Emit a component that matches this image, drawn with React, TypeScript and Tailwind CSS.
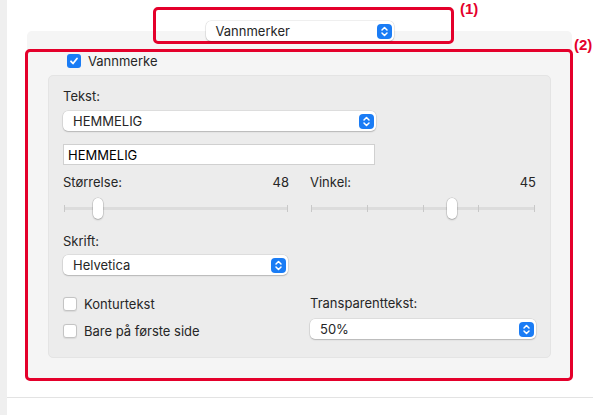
import React from "react";

const Stepper = () => (
    <span className="flex h-[15px] w-[15px] items-center justify-center rounded-[4px] bg-[#1a7cf5]">
        <svg width="9" height="11" viewBox="0 0 9 11" fill="none" stroke="white" strokeWidth={1.5} strokeLinecap="round" strokeLinejoin="round">
            <path d="M2 4l2.5-2.5L7 4" />
            <path d="M2 7l2.5 2.5L7 7" />
        </svg>
    </span>
);

const Popup = ({ label, className = "" }: { label: string; className?: string }) => (
    <div className={`flex h-[20px] items-center justify-between rounded-[5px] bg-white pl-[10px] pr-[2px] shadow-[0_0_0_0.5px_rgba(0,0,0,0.12),0_1px_1.5px_rgba(0,0,0,0.18)] ${className}`}>
        <span className="text-[13px] text-[#262626]">{label}</span>
        <Stepper />
    </div>
);

const Checkbox = ({ checked = false }: { checked?: boolean }) =>
    checked ? (
        <span className="flex h-[14px] w-[14px] items-center justify-center rounded-[3px] bg-[#1a7cf5]">
            <svg width="10" height="10" viewBox="0 0 10 10" fill="none" stroke="white" strokeWidth={1.8} strokeLinecap="round" strokeLinejoin="round">
                <path d="M2 5.3l2 2.2L8 2.5" />
            </svg>
        </span>
    ) : (
        <span className="h-[14px] w-[14px] rounded-[3px] border border-[#c4c4c4] bg-white shadow-[0_0.5px_1px_rgba(0,0,0,0.08)]" />
    );

const Slider = ({ ticks, thumb }: { ticks: number; thumb: number }) => (
    <div className="relative mx-[1px] h-[22px]">
        <div className="absolute left-0 right-0 top-[9px] h-[3px] rounded-full bg-[#dcdcdc]" />
        <div className="absolute left-0 right-0 top-[7px] flex justify-between">
            {Array.from({ length: ticks }).map((_, i) => (
                <span key={i} className="h-[7px] w-px bg-[#c8c8c8]" />
            ))}
        </div>
        <div
            className="absolute top-0 h-[21px] w-[10px] rounded-full bg-white shadow-[0_0_0_0.5px_rgba(0,0,0,0.18),0_1px_2px_rgba(0,0,0,0.2)]"
            style={{ left: thumb }}
        />
    </div>
);

export default function App() {
    return (
        <div className="relative flex h-[415px] w-[593px] overflow-hidden bg-white font-['Inter','Liberation_Sans',sans-serif] text-[13px] leading-[16px] text-[#262626]">
            <div className="w-[7px] shrink-0 bg-[#efefef]" />

            <div className="flex flex-1 flex-col">
                <div className="flex flex-col pl-[20px] pr-[21px] pt-[21px]">
                    <div className="relative z-10 flex justify-center">
                        <Popup label="Vannmerker" className="w-[188px] pl-[9px]" />
                    </div>

                    <div className="-mt-[10px] h-[347px] rounded-t-[5px] bg-[#f5f5f5] px-[21px] pt-[22px]">
                        <label className="ml-[19px] flex h-[16px] items-center gap-[7px]">
                            <Checkbox checked />
                            <span>Vannmerke</span>
                        </label>

                        <div className="mt-[6px] h-[283px] rounded-[5px] border border-[#e4e4e4] bg-[#ececec] px-[14px] pt-[12px]">
                            <div>Tekst:</div>
                            <Popup label="HEMMELIG" className="mt-[7px] w-[313px]" />
                            <div className="mt-[13px] flex h-[21px] w-[312px] items-center border border-[#d0d0d0] bg-white px-[4px] text-black">
                                HEMMELIG
                            </div>

                            <div className="mt-[9px] grid grid-cols-2 gap-x-[21px]">
                                <div>
                                    <div className="flex justify-between">
                                        <span>Størrelse:</span>
                                        <span>48</span>
                                    </div>
                                    <div className="mt-[8px]">
                                        <Slider ticks={2} thumb={29} />
                                    </div>
                                </div>
                                <div>
                                    <div className="flex justify-between">
                                        <span>Vinkel:</span>
                                        <span>45</span>
                                    </div>
                                    <div className="mt-[8px]">
                                        <Slider ticks={5} thumb={136} />
                                    </div>
                                </div>
                            </div>

                            <div className="mt-[13px]">Skrift:</div>
                            <Popup label="Helvetica" className="mt-[6px] w-[225px]" />

                            <div className="mt-[20px] grid grid-cols-2 gap-x-[21px]">
                                <div className="flex flex-col gap-[11px] pt-[1px]">
                                    <label className="flex h-[16px] items-center gap-[7px]">
                                        <Checkbox />
                                        <span>Konturtekst</span>
                                    </label>
                                    <label className="flex h-[16px] items-center gap-[7px]">
                                        <Checkbox />
                                        <span>Bare på første side</span>
                                    </label>
                                </div>
                                <div>
                                    <div>Transparenttekst:</div>
                                    <Popup label="50%" className="mt-[8px] w-[226px]" />
                                </div>
                            </div>
                        </div>
                    </div>
                </div>

                <div className="mt-[19px] border-t border-[#e3e3e3]" />
            </div>

            {/* annotations */}
            <div className="pointer-events-none absolute left-[153px] top-[7px] h-[37px] w-[301px] rounded-[5px] border-[3px] border-[#e4002b]" />
            <div className="pointer-events-none absolute left-[25px] top-[49px] h-[332px] w-[548px] rounded-[5px] border-[3px] border-[#e4002b]" />
            <span className="absolute left-[460px] top-0 font-['Liberation_Sans',Arial,sans-serif] text-[15px] font-bold leading-[17px] text-[#e4002b]">(1)</span>
            <span className="absolute left-[574px] top-[36px] font-['Liberation_Sans',Arial,sans-serif] text-[15px] font-bold leading-[17px] text-[#e4002b]">(2)</span>
        </div>
    );
}
